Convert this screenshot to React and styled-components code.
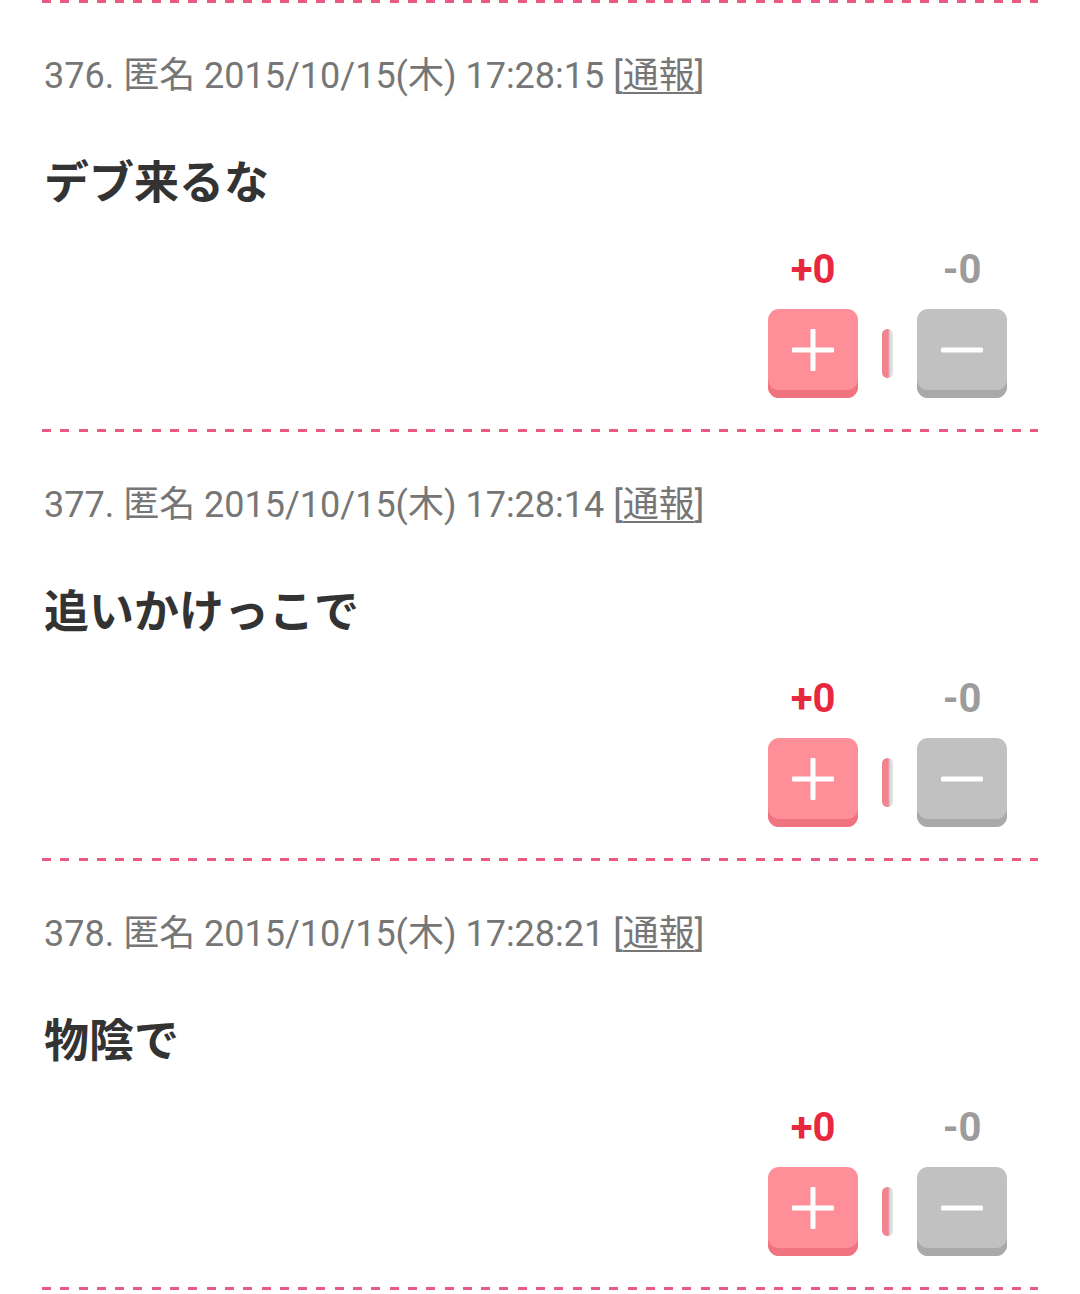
import React from "react";
import styled, { createGlobalStyle } from "styled-components";

const Global = createGlobalStyle`
  html, body { margin: 0; padding: 0; background: #fff; }
  body { font-family: Roboto, "Noto Sans CJK JP", sans-serif; }
`;

const List = styled.div`
  padding: 0 42px;
`;

const Divider = styled.div`
  height: 3px;
  background: repeating-linear-gradient(
    to right,
    #ea5a80 0px,
    #ea5a80 9px,
    transparent 9px,
    transparent 18.3px
  );
`;

const Post = styled.div`
  padding: 48px 0 31px 2px;
  display: flex;
  flex-direction: column;
`;

const Meta = styled.div`
  font-family: Roboto, "Noto Sans CJK JP", sans-serif;
  font-size: 36px;
  line-height: 50px;
  color: #767676;
  white-space: nowrap;
`;

const Report = styled.span`
  text-decoration: underline;
  text-underline-offset: 4px;
  text-decoration-thickness: 2px;
`;

const Body = styled.div`
  margin-top: 49px;
  font-family: "Noto Sans CJK JP", sans-serif;
  font-weight: 700;
  font-size: 45px;
  line-height: 60px;
  color: #333;
`;

const Votes = styled.div`
  margin-top: 40px;
  align-self: flex-end;
  margin-right: 31px;
  display: flex;
  align-items: flex-end;
  gap: 24px;
`;

const VoteCol = styled.div`
  display: flex;
  flex-direction: column;
  align-items: center;
  gap: 19px;
`;

const Count = styled.div`
  font-family: Roboto, sans-serif;
  font-weight: 700;
  font-size: 40px;
  line-height: 40px;
  color: ${(p) => (p.$up ? "#e8283f" : "#9c9c9c")};
`;

const VoteButton = styled.div`
  width: 90px;
  height: 89px;
  border-radius: 11px;
  box-sizing: border-box;
  padding-bottom: 8px;
  display: flex;
  align-items: center;
  justify-content: center;
  background: ${(p) => (p.$up ? "#fe8f98" : "#c1c1c1")};
  box-shadow: inset 0 -8px 0 ${(p) => (p.$up ? "#ef7480" : "#a9a9a9")};
`;

const Sep = styled.div`
  width: 11px;
  height: 49px;
  margin-bottom: 20px;
  border-radius: 6px;
  background: linear-gradient(to right, #f08591 0%, #f08591 55%, #dcdcdc 75%, #e4e4e4 100%);
`;

const PlusIcon = () => (
  <svg width="42" height="42" viewBox="0 0 42 42">
    <rect x="0" y="18.5" width="42" height="5" rx="1" fill="#fff" />
    <rect x="18.5" y="0" width="5" height="42" rx="1" fill="#fff" />
  </svg>
);

const MinusIcon = () => (
  <svg width="42" height="6" viewBox="0 0 42 6">
    <rect x="0" y="0.5" width="42" height="5" rx="1.5" fill="#fff" />
  </svg>
);

const posts = [
  { no: 376, time: "17:28:15", text: "デブ来るな" },
  { no: 377, time: "17:28:14", text: "追いかけっこで" },
  { no: 378, time: "17:28:21", text: "物陰で" },
];

export default function App() {
  return (
    <>
      <Global />
      <List>
        <Divider />
        {posts.map((p) => (
          <React.Fragment key={p.no}>
            <Post>
              <Meta>
                {p.no}. 匿名 2015/10/15(木) {p.time} [<Report>通報</Report>]
              </Meta>
              <Body>{p.text}</Body>
              <Votes>
                <VoteCol>
                  <Count $up>+0</Count>
                  <VoteButton $up>
                    <PlusIcon />
                  </VoteButton>
                </VoteCol>
                <Sep />
                <VoteCol>
                  <Count>-0</Count>
                  <VoteButton>
                    <MinusIcon />
                  </VoteButton>
                </VoteCol>
              </Votes>
            </Post>
            <Divider />
          </React.Fragment>
        ))}
      </List>
    </>
  );
}
